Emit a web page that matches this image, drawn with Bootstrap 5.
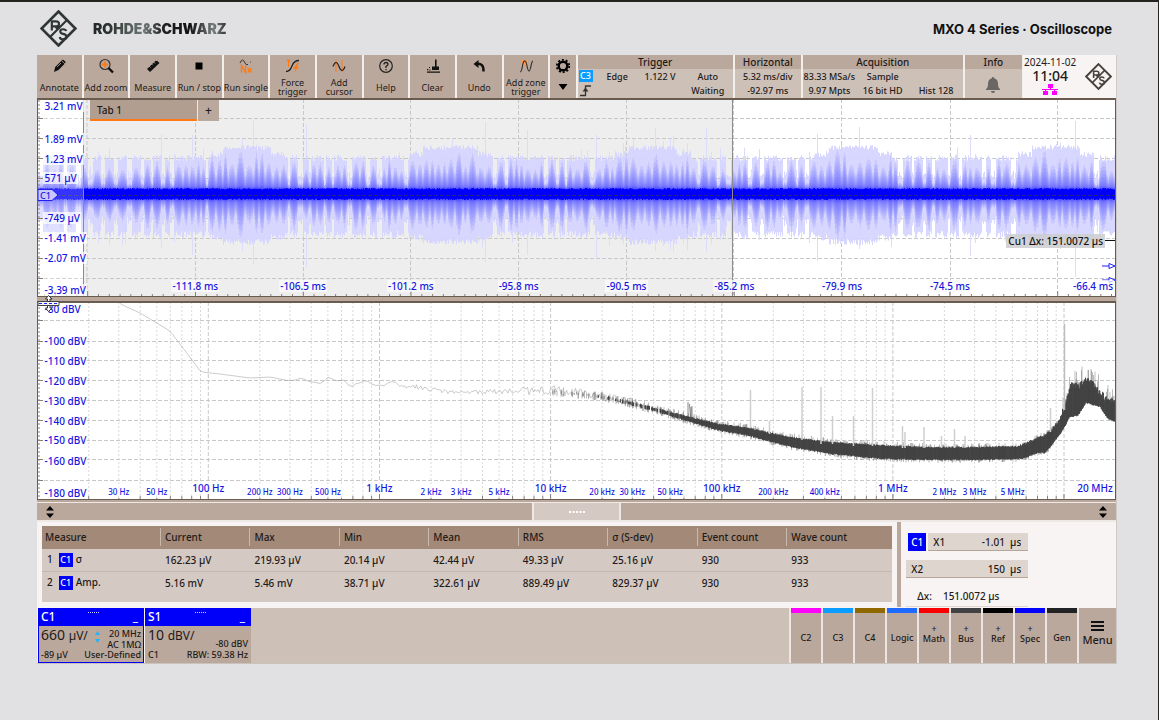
<!DOCTYPE html>
<html lang="en">
<head>
<meta charset="utf-8">
<meta name="viewport" content="width=device-width, initial-scale=1">
<title>MXO 4 Series Oscilloscope</title>
<link href="https://cdn.jsdelivr.net/npm/bootstrap@5.3.0/dist/css/bootstrap.min.css" rel="stylesheet">
<style>
:root{--tan:#bba89c;--tan-light:#cdc0b7;--tan-dark:#a38978;--paper:#f7f4f3;--ink:#1d1a19;--frame:#6a5b51;--chan:#0000fa;--orange:#ff7a14}
body{background:#e1e1e4;color:var(--ink);font-family:"Noto Sans","Open Sans",sans-serif;font-size:10px;line-height:14px;font-weight:500;border-top:2px solid #25231f;border-right:1px solid #25231f;min-height:100vh}
button{color:inherit;border:0;padding:0;font:inherit}
.brand-bar{height:53px;padding:0 46px 0 40px}
.brand-name{font:900 14px/16px Inter,sans-serif;background:linear-gradient(90deg,#222825,#2c3330 12%,#6f7876 38%,#222 52%,#111 72%,#777e7c 90%,#333);-webkit-background-clip:text;background-clip:text;color:transparent}
.model-name{font:700 13px/16px Inter,sans-serif;color:#111}
.screen{margin:0 41px 0 37px;background:var(--paper);border-right:1px solid #cfcac5}
.toolbar{display:grid;grid-template-columns:repeat(11,134fr) 76fr 466fr 198fr 480fr 172fr 276fr;gap:2px;height:43px;background:#f2efed}
.tool{background:var(--tan);font-size:9px;line-height:9px;font-weight:400;min-width:0;white-space:nowrap}
.tool svg{width:18px;height:16px;margin-top:3px}
.tool-text{height:18px;margin-top:4px}
.tool-two{display:flex;flex-direction:column;font-size:9px;line-height:9px}
.status{background:var(--tan-light);font-size:9px;line-height:14px;white-space:nowrap;min-width:0}
.status-title{background:var(--tan);font-size:10px;line-height:14px;text-align:center}
.trig-grid{display:grid;grid-template-columns:24px 1fr 1fr 1fr;padding:1px 4px 0 1px}
.chan-tag{display:block;background:#0a9cff;color:#fff;width:14px;height:12px;line-height:12px;text-align:center;font-size:9px}
.acq-grid{display:grid;grid-template-columns:repeat(3,1fr);padding-top:1px;text-align:center}
.horiz-values{padding-top:1px}
.clock-box{background:var(--paper);margin-left:-1px;padding-left:1px}
.clock-date{font-weight:400}
.clock-time{font-size:14px;line-height:14px}
.plot{position:relative;border:1px solid var(--frame);border-top-width:2px;background:#fff;height:199px;overflow:hidden}
.plot>svg{position:absolute;inset:0;width:100%;height:100%}
.lbl{position:absolute;color:#1515e0;font-size:10px;line-height:12px;white-space:nowrap;transform:translateY(-50%);background:rgba(255,255,255,.72);padding:0 1px}
.lbl-x{transform:translate(-50%,-50%)}
.lbl-zone{background:rgba(250,250,250,.8)}
.lbl-minor{font-size:8px}
.tabs{position:absolute;left:52px;top:0;height:21px;gap:1px;background:#eee8e4}
.tab-main{width:107px;background:#b29e91;border-bottom:2px solid var(--orange);text-align:left;padding-left:7px}
.tab-add{width:21px;background:var(--tan);font-size:12px}
.cursor-tag{position:absolute;right:10px;top:68.5%;background:rgba(205,205,208,.85);padding:0 2px;color:#111;line-height:14px}
.plot>.chan-marker{inset:auto;left:0;top:45.5%;width:21px;height:12px}
.divider{position:relative;height:4px;background:var(--tan)}
.splitter{position:absolute;left:1px;top:-3px;z-index:2}
.bar-wrap{background:var(--tan);padding-top:2px}
.scroll-row{height:20px;border-top:1px solid #efe9e6;border-bottom:2px solid #efe9e6;padding:0 9px}
.scroll-row .handle{width:89px;height:17px;background:#d5c9c4;border:2px solid #efe9e6;border-width:0 2px}
.results{height:85px;overflow:hidden}
.measure-pane{padding:4px 5px 5px 5px;border-right:4px solid var(--tan);width:80.1%;flex:none}
.cursor-pane{padding:11px 5px 0}
.measure{width:100%;height:76px;table-layout:fixed;background:#d5c9c4;border-collapse:collapse}
.measure th{background:var(--tan-dark);font-weight:500;height:23px;padding:0 0 1px 5px;line-height:14px;background-image:linear-gradient(#c9bab0,#c9bab0);background-repeat:no-repeat;background-size:1px 18px;background-position:0 2px}
.measure th:first-child{background-image:none;padding-left:3px;width:118px}
.measure th:last-child{width:106px}
.measure td{height:22px;padding:0 0 0 5px;vertical-align:middle}
.measure tr:first-child td{border-bottom:1px solid #c8b7ae}
.measure tr:last-child td{height:30px;padding-bottom:8px}
.c1-tag{display:inline-block;background:var(--chan);color:#fff;width:14px;height:14px;line-height:14px;font-size:9px;text-align:center;margin:0 3px 0 6px}
.c1-big{background:var(--chan);color:#fff;width:18px;height:18px;line-height:18px;text-align:center}
.cursor-row{gap:2px;padding-left:2px;margin-bottom:9px}
.field{background:#ded5cf;border-bottom:1px solid #b5a498;height:18px;padding:0 7px 0 5px}
.field input{border:0;background:transparent;text-align:right;width:64px;padding:0;color:inherit;font:inherit}
.field-x1{width:100px}.field-x2{width:122px}
.delta-row{margin-top:11px;height:17px;padding-left:11px;gap:11px}
.dock{height:57px;background:var(--tan-light);border-top:1px solid var(--paper);border-bottom:1px solid #c9c3bc}
.sigs{gap:1px;padding-left:1px;background:var(--paper)}
.sig{width:106px;background:var(--tan);font-size:9px;line-height:11px;border:1px solid var(--tan);white-space:nowrap}
.sig-active{border-color:var(--chan)}
.sig-head{background:var(--chan);color:#fff;font-size:12px;line-height:17px;height:18px;padding:0 6px 0 3px;margin:-1px -1px 0}
.sig-body{padding:1px 2px 0}
.big-num{font-size:14px;line-height:16px;font-weight:400}
.big-unit{font-size:12px}
.sig-right{line-height:11px;padding-top:1px;height:22px}
.dock-btns{background:#ece5e1;gap:2px;padding-left:2px}
.dock-btn{width:30px;background:var(--tan);border-top:5px solid var(--bar);font-size:9px;line-height:10px}
.dock-menu{width:37px;background:var(--tan);font-size:11px;line-height:14px;gap:2px;padding-bottom:4px}
.menu-lines{width:13px;height:10px;border-top:2px solid #111;border-bottom:2px solid #111;background:linear-gradient(#111,#111) center/100% 2px no-repeat}
.bar-c2{--bar:#f0f}.bar-c3{--bar:#0a9cff}.bar-c4{--bar:#8f6900}.bar-logic{--bar:#1f6bff}.bar-math{--bar:#f80000}.bar-bus{--bar:#404244}.bar-ref{--bar:#000}.bar-spec{--bar:#0000fa}.bar-gen{--bar:#202224}
</style>
</head>
<body>
<svg width="0" height="0" class="position-absolute" aria-hidden="true"><symbol id="rs" viewBox="0 0 36 36"><path d="M18 1.500 34.500 18 18 34.500 1.500 18Z" fill="none" stroke="currentColor" stroke-width="2.600"/><path d="M11.500 20V11h4q3 0 3 2.500T15.500 16h-4m3.500 0 3 3.500M25.500 20.500q-.5-1.800-3-1.800-2.800 0-2.800 2t2.800 2.500q3.300.6 3.300 2.900 0 2.400-3.300 2.400-2.800 0-3.300-2.300M26.500 9.500 9.500 26.500" fill="none" stroke="currentColor" stroke-width="2.100"/></symbol></svg>

<header class="brand-bar d-flex align-items-center justify-content-between">
  <div class="d-flex align-items-center gap-3">
    <svg width="37" height="37" color="#2f3634"><use href="#rs"/></svg>
    <span class="brand-name">ROHDE&amp;SCHWARZ</span>
  </div>
  <span class="model-name">MXO 4 Series · Oscilloscope</span>
</header>

<main class="screen">
  <nav class="toolbar" aria-label="Toolbar">
    <button class="tool d-flex flex-column align-items-center"><svg viewBox="0 0 18 16"><path d="m4 14 1.200-5L12 2.200q1-.8 2 0l1.200 1.300q.8 1 0 1.800L8.500 12Z" fill="#111"/><path d="m7 9 4-4M12 3l3 3" stroke="#bba89c" stroke-width=".8"/></svg><span class="tool-text d-flex align-items-center">Annotate</span></button>
    <button class="tool d-flex flex-column align-items-center"><svg viewBox="0 0 18 16"><circle cx="8" cy="6.500" r="5" fill="none" stroke="#3a302c" stroke-width="1.200"/><path d="m11.500 10 4.500 4.500" stroke="#111" stroke-width="2.400"/><path d="M8 3.500v6M5 6.500h6" stroke="#ff7a14" stroke-width="1.800"/></svg><span class="tool-text d-flex align-items-center">Add zoom</span></button>
    <button class="tool d-flex flex-column align-items-center"><svg viewBox="0 0 18 16"><path d="M3 11 12.500 2l3 3L6 14Z" fill="#111"/><path d="m5 8 1.500 1.500M7.500 6l1.200 1.200M9.500 4 11 5.500M12 2l1.200 1.200" stroke="#bba89c" stroke-width=".9"/></svg><span class="tool-text d-flex align-items-center">Measure</span></button>
    <button class="tool d-flex flex-column align-items-center"><svg viewBox="0 0 18 16"><path d="M5.500 4.500h7v7h-7z" fill="#000"/></svg><span class="tool-text d-flex align-items-center">Run / stop</span></button>
    <button class="tool d-flex flex-column align-items-center"><svg viewBox="0 0 18 16"><path d="M3 5q2.500-6 5 0 1 2.500 3 1.500m2-2 .8-.6" fill="none" stroke="#333"/><path d="M4.500 14.500V7.500l4 7v-7M10.500 10l4 4.500m0-4.500-4 4.500" fill="none" stroke="#ff7a14" stroke-width="1.400"/></svg><span class="tool-text d-flex align-items-center">Run single</span></button>
    <button class="tool d-flex flex-column align-items-center"><svg viewBox="0 0 18 16"><path d="M2 13.500q4 0 6-5.500t7-5.500" fill="none" stroke="#222" stroke-width="1.300"/><path d="M4.500 3v6M3 2h3L4.500 4Z" stroke="#ff7a14" fill="#ff7a14"/><path d="m13 5-4 6h2.500L10 15l5-6.500h-2.500L15 5Z" fill="#ff7a14"/></svg><span class="tool-text tool-two"><span>Force</span><span>trigger</span></span></button>
    <button class="tool d-flex flex-column align-items-center"><svg viewBox="0 0 18 16"><path d="M6 2v12M12 2v12" stroke="#ff7a14"/><path d="M3 8.500q3-8 6 0t6 0" fill="none" stroke="#222" stroke-width="1.200"/></svg><span class="tool-text tool-two"><span>Add</span><span>cursor</span></span></button>
    <button class="tool d-flex flex-column align-items-center"><svg viewBox="0 0 18 16"><circle cx="9" cy="8" r="6.300" fill="none" stroke="#222" stroke-width="1.200"/><path d="M7 6.500q0-2 2-2t2 1.800Q11 7.500 9 8.300V10M9 11v1.300" fill="none" stroke="#222" stroke-width="1.300"/></svg><span class="tool-text d-flex align-items-center">Help</span></button>
    <button class="tool d-flex flex-column align-items-center"><svg viewBox="0 0 18 16"><path d="M11 1.500h1.600v7h2.400v3.500H8V8.500h3ZM3 13.500h13v1.200H3ZM3 11h1.300v1.300H3ZM5 9h1v1H5ZM5.300 11.500h1.200v1H5.300Z" fill="#111"/></svg><span class="tool-text d-flex align-items-center">Clear</span></button>
    <button class="tool d-flex flex-column align-items-center"><svg viewBox="0 0 18 16"><path d="M6 6q8-1.500 7.500 7.500" fill="none" stroke="#111" stroke-width="2.400"/><path d="M3.500 6 8.500 2v8Z" fill="#111"/></svg><span class="tool-text d-flex align-items-center">Undo</span></button>
    <button class="tool d-flex flex-column align-items-center"><svg viewBox="0 0 18 16"><path d="M4 2h7v6H4z" fill="#ff9a55"/><path d="M3 14q1.500 0 2.500-6T8 3q1 0 2 5t2 5q1 0 2-5t2-5" fill="none" stroke="#333" stroke-width="1.200"/></svg><span class="tool-text tool-two"><span>Add zone</span><span>trigger</span></span></button>
    <button class="tool d-flex flex-column align-items-center" aria-label="Settings"><svg viewBox="0 0 18 16"><circle cx="9" cy="8" r="4.300" fill="none" stroke="#000" stroke-width="2.400"/><circle cx="9" cy="8" r="6.200" fill="none" stroke="#000" stroke-width="1.800" stroke-dasharray="2 1.900"/></svg><span class="tool-text d-flex align-items-center"><svg class="m-0" viewBox="0 0 18 16"><path d="M4.500 5h9L9 11Z" fill="#000"/></svg></span></button>
    <section class="status"><div class="status-title">Trigger</div>
      <div class="trig-grid"><span class="chan-tag">C3</span><span class="ps-1">Edge</span><span>1.122 V</span><span class="text-center">Auto</span>
      <svg width="14" height="13" viewBox="0 0 14 13"><path d="M3.500 7.500 6.500 3.500l3 4Z" fill="#333"/><path d="M1 11.500h5.500V2H12" fill="none" stroke="#333" stroke-width="1.300"/></svg><span></span><span></span><span class="text-center">Waiting</span></div></section>
    <section class="status"><div class="status-title">Horizontal</div><div class="horiz-values text-center"><div>5.32 ms/div</div><div>-92.97 ms</div></div></section>
    <section class="status"><div class="status-title">Acquisition</div><div class="acq-grid"><span>83.33 MSa/s</span><span>Sample</span><span></span><span>9.97 Mpts</span><span>16 bit HD</span><span>Hist 128</span></div></section>
    <section class="status"><div class="status-title">Info</div><div class="text-center pt-2"><svg width="14" height="16" viewBox="0 0 14 16"><path d="M7 0q1.200 0 1.200 1.300Q12 2.300 12 7q0 4 2 5v1H0v-1q2-1 2-5 0-4.700 3.800-5.700Q5.800 0 7 0ZM5 14h4q0 2-2 2t-2-2Z" fill="#6a6663"/></svg></div></section>
    <section class="clock-box d-flex justify-content-between pe-1">
      <div class="text-center"><div class="clock-date">2024-11-02</div><div class="clock-time">11:04</div><svg class="d-block mx-auto" width="16" height="12" viewBox="0 0 16 12"><path d="M6 1h5v4H6ZM1 8h5v4H1ZM10 8h5v4h-5ZM0 6h16v1H0ZM8 5h1v1H8ZM3 7h1v1H3ZM12 7h1v1h-1Z" fill="#f0f"/></svg></div>
      <svg class="align-self-center" width="27" height="27" color="#48423f"><use href="#rs"/></svg>
    </section>
  </nav>

  <section class="plot" id="timePlot" aria-label="Time signal">
    <svg viewBox="38 100 1077 196" preserveAspectRatio="none"></svg>
    <div class="tabs d-flex"><button class="tab-main">Tab 1</button><button class="tab-add" aria-label="Add tab">+</button></div>
    <svg class="chan-marker" viewBox="0 0 21 12"><path d="M0 .5h14l6 5.500-6 5.500H0Z" fill="#c9c9ff" stroke="#2020f0"/><text x="2" y="9.500" font-size="9" fill="#1515e0">C1</text></svg>
    <span class="cursor-tag">Cu1 Δx: 151.0072 µs</span>
  </section>
  <div class="divider"><svg class="splitter" width="22" height="22" viewBox="0 0 22 22"><path d="M0 7.500h21v4H0Z" fill="#f5f5f5" stroke="#444"/><path d="M1 9.500h20" stroke="#2020f0" stroke-dasharray="3 2"/><path d="M10.500 1.500 14 5h-2v2.500H9.500V5h-2ZM10.500 17.500 14 14h-2v-2.500H9.500V14h-2Z" fill="#fff" stroke="#333"/></svg></div>
  <section class="plot" id="specPlot" aria-label="Spectrum">
    <svg viewBox="38 303 1077 196" preserveAspectRatio="none"></svg>
  </section>
  <div class="bar-wrap"><div class="scroll-row d-flex justify-content-between align-items-center">
    <svg width="8" height="12" viewBox="0 0 8 12"><path d="M0 4.500 4 0l4 4.500ZM0 7.500 4 12l4-4.500Z" fill="#000"/></svg>
    <div class="handle d-flex align-items-center justify-content-center"><svg width="16" height="2"><path d="M0 1h16" stroke="#fff" stroke-width="2" stroke-dasharray="2 1.500"/></svg></div>
    <svg width="8" height="12" viewBox="0 0 8 12"><path d="M0 4.500 4 0l4 4.500ZM0 7.500 4 12l4-4.500Z" fill="#000"/></svg>
  </div></div>

  <section class="results d-flex">
    <div class="measure-pane">
      <table class="measure">
        <thead><tr><th>Measure</th><th>Current</th><th>Max</th><th>Min</th><th>Mean</th><th>RMS</th><th>σ (S-dev)</th><th>Event count</th><th>Wave count</th></tr></thead>
        <tbody>
          <tr><td>1<span class="c1-tag">C1</span>σ</td><td>162.23 µV</td><td>219.93 µV</td><td>20.14 µV</td><td>42.44 µV</td><td>49.33 µV</td><td>25.16 µV</td><td>930</td><td>933</td></tr>
          <tr><td>2<span class="c1-tag">C1</span>Amp.</td><td>5.16 mV</td><td>5.46 mV</td><td>38.71 µV</td><td>322.61 µV</td><td>889.49 µV</td><td>829.37 µV</td><td>930</td><td>933</td></tr>
        </tbody>
      </table>
    </div>
    <div class="cursor-pane flex-fill">
      <div class="cursor-row d-flex"><span class="c1-big">C1</span><div class="field field-x1 d-flex align-items-center justify-content-between"><label for="x1">X1</label><input id="x1" value="-1.01  µs"></div></div>
      <div class="field field-x2 d-flex align-items-center justify-content-between"><label for="x2">X2</label><input id="x2" value="150  µs"></div>
      <div class="delta-row d-flex"><span>Δx:</span><span>151.0072 µs</span></div>
      <div class="field field-x2"></div>
    </div>
  </section>

  <footer class="dock d-flex justify-content-between">
    <div class="sigs d-flex">
      <section class="sig sig-active">
        <div class="sig-head d-flex justify-content-between"><span>C1</span><svg class="mt-1" width="12" height="2"><path d="M0 0h12" stroke="#cfd0ff" stroke-width="2" stroke-dasharray="1 1"/></svg><span>_</span></div>
        <div class="sig-body">
          <div class="d-flex justify-content-between"><div class="big-num">660 <span class="big-unit">µV/</span></div><svg class="mt-1" width="5" height="12" viewBox="0 0 5 12"><path d="M0 4 2.500 0 5 4ZM0 8l2.500 4L5 8Z" fill="#1fb4ff"/></svg><div class="sig-right text-end">20 MHz<br>AC 1MΩ</div></div>
          <div class="d-flex justify-content-between"><span>-89 µV</span><span>User-Defined</span></div>
        </div>
      </section>
      <section class="sig">
        <div class="sig-head d-flex justify-content-between"><span>S1</span><svg class="mt-1" width="12" height="2"><path d="M0 0h12" stroke="#cfd0ff" stroke-width="2" stroke-dasharray="1 1"/></svg><span>_</span></div>
        <div class="sig-body">
          <div class="d-flex justify-content-between"><div class="big-num">10 <span class="big-unit">dBV/</span></div><div class="sig-right d-flex align-items-end">-80 dBV</div></div>
          <div class="d-flex justify-content-between"><span>C1</span><span>RBW: 59.38 Hz</span></div>
        </div>
      </section>
    </div>
    <div class="dock-btns d-flex">
      <button class="dock-btn bar-c2">C2</button><button class="dock-btn bar-c3">C3</button><button class="dock-btn bar-c4">C4</button><button class="dock-btn bar-logic">Logic</button><button class="dock-btn bar-math pb-2">+<br>Math</button><button class="dock-btn bar-bus pb-2">+<br>Bus</button><button class="dock-btn bar-ref pb-2">+<br>Ref</button><button class="dock-btn bar-spec pb-2">+<br>Spec</button><button class="dock-btn bar-gen">Gen</button>
      <button class="dock-menu d-flex flex-column align-items-center justify-content-center"><span class="menu-lines"></span>Menu</button>
    </div>
  </footer>
</main>

<script src="https://cdn.jsdelivr.net/npm/bootstrap@5.3.0/dist/js/bootstrap.bundle.min.js"></script>
<script>
const NS='http://www.w3.org/2000/svg';
let seed=7;
const rnd=()=>{seed=(seed*1664525+1013904223)>>>0;return seed/4294967296};
function path(svg,d,attrs){const p=document.createElementNS(NS,'path');p.setAttribute('d',d);p.setAttribute('fill','none');for(const k in attrs)p.setAttribute(k,attrs[k]);svg.append(p)}
function label(plot,text,x,y,box,cls){const s=document.createElement('span');s.className='lbl '+(cls||'');s.textContent=text;s.style.left=((x-38)/1077*100).toFixed(2)+'%';s.style.top=((y-box)/196*100).toFixed(2)+'%';plot.append(s)}
const interp=(pts,x)=>{for(let i=1;i<pts.length;i++)if(x<=pts[i][0]){const a=pts[i-1],b=pts[i],t=(x-a[0])/(b[0]-a[0]);return a.map((v,k)=>v+(b[k]-v)*t)}return pts[pts.length-1]};

// time signal
const tp=document.getElementById('timePlot'),ts=tp.querySelector('svg');
path(ts,'M84 99H732V297H84Z',{fill:'#eeeeee'});
const vx=[87,195.5,303.5,410.5,518.5,626.5,733.5,841.5,950.5,1057.5];
path(ts,vx.map(x=>`M${x} 99V297`).join('')+[118.5,138.5,158.5,178.5,218.5,238.5,258.5,278.5].map(y=>`M38 ${y}H1115`).join(''),{stroke:'#c8c8c8','stroke-dasharray':'4 2'});
const bursts=[[222,271],[422,478],[628,677],[828,878],[1031,1080]];
const N=12,layers=Array.from({length:N},()=>'');
let spikes='',sw=0,lobe=0,depth=1,isGap=false;
for(let x=38;x<1115;x++){
  const inB=bursts.some(b=>x>b[0]&&x<b[1]), near=bursts.some(b=>x>b[0]-14&&x<b[1]+14);
  // lobes of random width make the beat pattern
  if(lobe<=0){
    isGap=!near&&!isGap&&rnd()<.5;
    sw=lobe=isGap?2+Math.floor(rnd()*4):5+Math.floor(rnd()*5);depth=.4+rnd()*.6}
  const ph=Math.sin(Math.PI*(sw-lobe+.5)/sw);lobe--;
  let up=inB?43+rnd()*5:32+rnd()*6+(near?4:0), dn=inB?43+rnd()*6:35+rnd()*7+(near?3:0);
  if(isGap){const c=.35+rnd()*.25;up*=c;dn*=c+.15}
  const k=isGap?.5:.4+depth*ph*.85;
  layers[0]+=`M${x+.5} ${(193-up).toFixed(1)}V${(196+dn).toFixed(1)}`;
  for(let i=1;i<N;i++){const f=Math.pow(1-i/(N+.5),1.9);layers[i]+=`M${x+.5} ${(189-up*.8*f*k).toFixed(1)}V${(199+dn*.8*f*k).toFixed(1)}`}
  if(rnd()<.06)spikes+=`M${x+.5} ${193-up-rnd()*12}V${196+dn+rnd()*10}`;
}
[[253,121,264],[306,125,267],[161,134,248],[192,135,255],[485,122,262],[527,130,255],[817,134,261],[859,127,249],[970,135,256],[1075,121,277],[706,127,252],[655,128,251],[596,135,258]].forEach(s=>spikes+=`M${s[0]+.5} ${s[1]}V${s[2]}`);
path(ts,spikes,{stroke:'#dcdcfb'});
layers.forEach((d,i)=>path(ts,d,i?{stroke:'#0000ff','stroke-opacity':i>8?.13:.065}:{stroke:'#d4d4ff','stroke-opacity':.93}));
let core='';for(let x=38;x<1115;x++)core+=`M${x+.5} ${(189.5-rnd()*1.5).toFixed(1)}V${(198.5+rnd()*1.5).toFixed(1)}`;
path(ts,core,{stroke:'#0000fa','stroke-width':1.1});
path(ts,'M38 195.500H1115',{stroke:'#26267a','stroke-dasharray':'4 2'});
path(ts,'M38 100H84V296H38Z',{fill:'#fff','fill-opacity':.2});
path(ts,'M83.500 99V297M732.500 99V297',{stroke:'#8c8c8c'});
let tick='';for(let i=-14;i<86;i++){const x=195.5+i*10.777;tick+=`M${x.toFixed(1)} ${i%10?294:291}V296`}
for(let y=101;y<296;y+=4)tick+=`M38 ${y}h2`;
[118,138,158,178,218,238,258,278].forEach(y=>tick+=`M38 ${y}.5h5`);
path(ts,tick,{stroke:'#8b817a'});
path(ts,'M1105 240.500H1115',{stroke:'#111'});
path(ts,'M1102 266H1109M1109 263.500v5l6-2.500ZM1102 280H1109M1109 277.500v5l6-2.500Z',{stroke:'#2020f0',fill:'#fff'});
[['3.21 mV',106],['1.89 mV',139],['1.23 mV',158.5],['571 µV',178],['-749 µV',218],['-1.41 mV',238],['-2.07 mV',258],['-3.39 mV',290]].forEach(l=>label(tp,l[0],43.5,l[1],100));
['-111.8 ms','-106.5 ms','-101.2 ms','-95.8 ms','-90.5 ms','-85.2 ms','-79.9 ms','-74.5 ms'].forEach((t,i)=>label(tp,t,195.3+i*107.8,286,100,'lbl-x lbl-zone'));
label(tp,'-66.4 ms',1093,286,100,'lbl-x');

// spectrum
const sp=document.getElementById('specPlot'),ss=sp.querySelector('svg');
let major='',minor='',st='';
const fx=f=>208.3+171.15*(Math.log10(f)-2);
for(let d=1;d<=7;d++)for(let m=1;m<10;m++){const f=m*10**d,x=fx(f);if(x<88||x>1115)continue;
  if(m==1)major+=`M${x.toFixed(1)} 302V499`;else minor+=`M${x.toFixed(1)} 302V499`;st+=`M${x.toFixed(1)} ${m==1?494:496}V499`}
const hy=[320.5,341.5,360.5,380.5,400.5,420.5,440.5,459.5,480.5];
path(ss,minor,{stroke:'#dadada','stroke-dasharray':'2 2'});
path(ss,major+hy.map(y=>`M38 ${y}H1115`).join(''),{stroke:'#c8c8c8','stroke-dasharray':'4 2'});
hy.forEach(y=>st+=`M38 ${y}h5`);for(let y=304;y<498;y+=4)st+=`M38 ${y}h2`;
path(ss,st,{stroke:'#8b817a'});
const low=[[88,302],[118,303],[140,313],[170,331],[186,352],[201,372],[220,374],[250,378],[270,377],[290,381],[303,378],[313,384],[328,379],[345,382],[353,387],[361,381],[380,385],[390,383],[410,386],[440,391],[480,392],[520,391],[550,390],[570,392],[600,396],[640,404]];
let line='M120 303.500';for(let x=124;x<640;x+=x<400?4:1.5){const n=x<290?0:x<400?4:x<520?5:9;line+=`L${x} ${(interp(low,x)[1]+(rnd()-.5)*n).toFixed(1)}`}
path(ss,line,{stroke:'#999','stroke-opacity':.5});
// x, upper edge, lower edge
const band=[[550,391,392],[600,396,397],[630,402,404],[660,410,412],[690,418,421],[720,425,430],[745,428,434],[790,438,446],[830,443,453],[880,446,458],[930,448,459],[975,448,459],[1020,447,458],[1026,445,457],[1037,439,452],[1045,437,452],[1055,427,440],[1063,415,429],[1070,388,416],[1078,390,415],[1086,383,402],[1093,388,404],[1100,396,406],[1108,404,418],[1115,406,421]];
let dark='',fringe='';
for(let x=552;x<1115;x+=.5){const b=interp(band,x),hi=x>1062,n=hi?7:x>1020?3:1.5;
  if(x>680||rnd()<(x-590)/120)dark+=`M${x} ${(b[1]-rnd()*n).toFixed(1)}V${(b[2]+rnd()*1.5).toFixed(1)}`;
  if(rnd()<.45)fringe+=`M${x} ${(b[1]-Math.pow(rnd(),1.4)*(hi?20:5)).toFixed(1)}V${(b[2]+rnd()*(hi?1:4)).toFixed(1)}`}
path(ss,fringe,{stroke:'#444','stroke-opacity':.45,'stroke-width':.8});
path(ss,dark,{stroke:'#404040','stroke-width':.9});
path(ss,'M688 402v14M689.500 404l1 13M691 407v12M692 406v13',{stroke:'#555','stroke-opacity':.7});
path(ss,'M750.500 390V428M769.500 421V434M802 387V440M821 387V444M832.500 416V444M853.500 416V446M872.500 388V446M902.500 426V448M905 432V448M924 427V448M941.500 436V448M954.500 429V448M965 436V448M1050.500 408V432',{stroke:'#cfcfcf','stroke-width':1.5});
path(ss,'M1064.500 324V410',{stroke:'#bdbdbd','stroke-width':1.5});
[['-80 dBV',309],['-100 dBV',341.5],['-110 dBV',361],['-120 dBV',381],['-130 dBV',401],['-140 dBV',421],['-150 dBV',440.5],['-160 dBV',460.5],['-180 dBV',493]].forEach(l=>label(sp,l[0],43.5,l[1],303));
[['100 Hz',1e2],['1 kHz',1e3],['10 kHz',1e4],['100 kHz',1e5],['1 MHz',1e6]].forEach(l=>label(sp,l[0],fx(l[1]),488.5,303,'lbl-x'));
label(sp,'20 MHz',1095,488.5,303,'lbl-x');
[['30 Hz',30],['50 Hz',50],['200 Hz',200],['300 Hz',300],['500 Hz',500],['2 kHz',2e3],['3 kHz',3e3],['5 kHz',5e3],['20 kHz',2e4],['30 kHz',3e4],['50 kHz',5e4],['200 kHz',2e5],['400 kHz',4e5],['2 MHz',2e6],['3 MHz',3e6],['5 MHz',5e6]].forEach(l=>label(sp,l[0],fx(l[1]),492,303,'lbl-x lbl-minor'));
</script>
</body>
</html>
